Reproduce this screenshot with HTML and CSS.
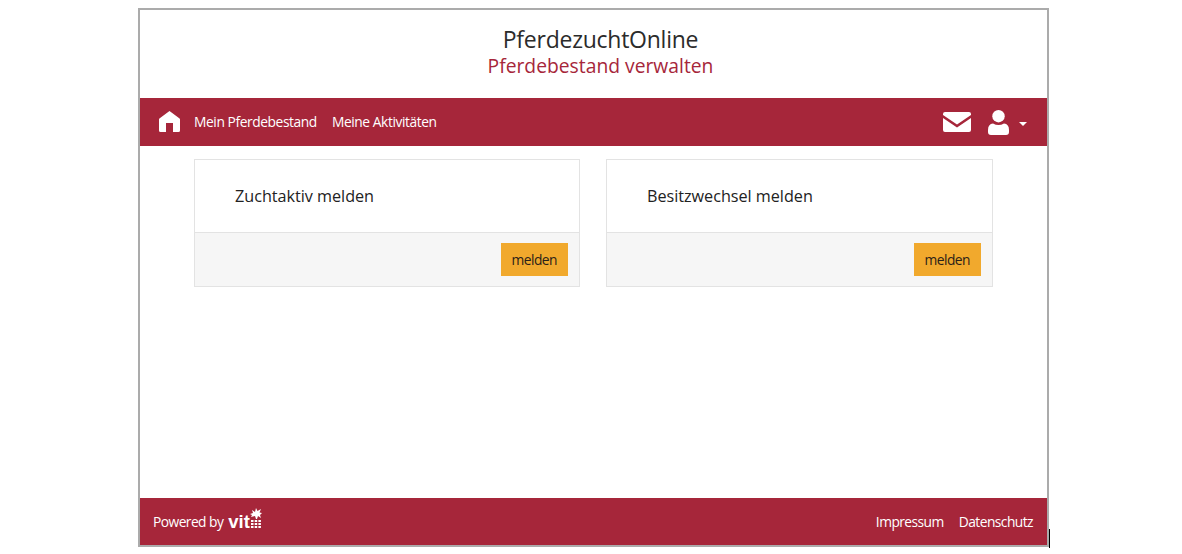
FILE: index.html
```html
<!DOCTYPE html>
<html lang="de">
<head>
<meta charset="utf-8">
<title>PferdezuchtOnline</title>
<link rel="stylesheet" href="styles.css">
</head>
<body>
<div class="frame">
  <header class="head">
    <div class="title">PferdezuchtOnline</div>
    <div class="subtitle">Pferdebestand verwalten</div>
  </header>
  <nav class="nav">
    <a class="home" href="#" aria-label="Start">
      <svg viewBox="0 0 21 21" width="21" height="21"><path fill="#fff" d="M10.5 0 L20.6 7.4 Q21 7.8 21 8.6 V19.5 Q21 21 19.5 21 H14 V12 H7 V21 H1.5 Q0 21 0 19.5 V8.6 Q0 7.8 0.4 7.4 Z"/></svg>
    </a>
    <a class="link" href="#">Mein Pferdebestand</a>
    <a class="link" href="#">Meine Aktivitäten</a>
    <span class="spacer"></span>
    <a class="mail" href="#" aria-label="Nachrichten">
      <svg viewBox="0 0 28 20" width="28" height="20"><path fill="#fff" d="M2 0 H26 Q28 0 28 2 V3 L14 12.5 L0 3 V2 Q0 0 2 0 Z M0 6 L14 15.5 L28 6 V18 Q28 20 26 20 H2 Q0 20 0 18 Z"/></svg>
    </a>
    <a class="user" href="#" aria-label="Konto">
      <svg viewBox="0 0 21 25" width="21" height="25"><circle cx="10.5" cy="6.2" r="6.2" fill="#fff"/><path fill="#fff" d="M5 13.5 Q10.5 16.5 16 13.5 Q21 14 21 20 V22 Q21 25 18 25 H3 Q0 25 0 22 V20 Q0 14 5 13.5 Z"/></svg>
      <span class="caret"></span>
    </a>
  </nav>
  <main class="cards">
    <section class="card">
      <div class="card-body">Zuchtaktiv melden</div>
      <div class="card-foot"><button class="btn">melden</button></div>
    </section>
    <section class="card">
      <div class="card-body">Besitzwechsel melden</div>
      <div class="card-foot"><button class="btn">melden</button></div>
    </section>
  </main>
  <footer class="foot">
    <span class="powered">Powered by</span>
    <span class="logo">vit<svg class="plume" viewBox="0 0 12 20" width="12" height="20"><g fill="#fff"><path d="M6 11 L5 8 L1 9 L2 7 L0 6 L3 5 L2 2 L5 4 L6 0 L7.5 3 L11 1 L9.5 4.5 L12 5 L10 7 L11 10 L8 8 L7 11 Z"/><rect x="1" y="12" width="2.5" height="2"/><rect x="4.7" y="12" width="2.5" height="2"/><rect x="8.4" y="12" width="2.5" height="2"/><rect x="1" y="15" width="2.5" height="2"/><rect x="4.7" y="15" width="2.5" height="2"/><rect x="8.4" y="15" width="2.5" height="2"/><rect x="1" y="18" width="2.5" height="2"/><rect x="4.7" y="18" width="2.5" height="2"/><rect x="8.4" y="18" width="2.5" height="2"/></g></svg></span>
    <span class="spacer"></span>
    <a class="flink" href="#">Impressum</a>
    <a class="flink" href="#">Datenschutz</a>
  </footer>
  <span class="cursor"></span>
</div>
</body>
</html>
```
FILE: styles.css
```css
* { box-sizing: border-box; }
html, body { height: 100%; }
body {
  margin: 0;
  padding-top: 8px;
  background: #fff;
  font-family: "Open Sans", "Noto Sans", sans-serif;
  color: #212529;
  overflow: hidden;
}
a { color: inherit; text-decoration: none; }
.frame {
  position: relative;
  width: 911px;
  height: 539px;
  margin-left: 138px;
  border: 2px solid #ababab;
  display: flex;
  flex-direction: column;
}
.head {
  height: 88px;
  padding: 14px 0 0 14px;
  text-align: center;
}
.title { font-size: 23px; line-height: 30px; color: #2b2b2b; letter-spacing: -0.25px; }
.subtitle { font-size: 19.3px; line-height: 24px; color: #a6263a; }
.nav {
  height: 48px;
  background: #a6263a;
  color: #fff;
  display: flex;
  align-items: center;
  padding: 0 20px 0 19px;
  font-size: 13.8px;
  letter-spacing: -0.42px;
}
.home { display: flex; margin-right: 14px; margin-top: -2px; }
.link { margin-right: 15px; margin-top: -1px; }
.spacer { flex: 1; }
.mail { display: flex; margin-right: 17px; }
.user { display: flex; align-items: center; }
.caret {
  width: 0;
  height: 0;
  margin: 4px 0 0 10px;
  border-left: 4px solid transparent;
  border-right: 4px solid transparent;
  border-top: 4px solid #fff;
}
.cards {
  flex: 1;
  display: flex;
  gap: 26px;
  padding: 13px 54px 0;
  align-items: flex-start;
}
.card {
  width: 386px;
  height: 128px;
  border: 1px solid #e3e3e3;
  display: flex;
  flex-direction: column;
}
.card + .card { width: 387px; }
.card-body {
  height: 73px;
  padding: 0 40px;
  display: flex;
  align-items: center;
  font-size: 16.2px;
  letter-spacing: -0.02px;
  color: #222;
  border-bottom: 1px solid #e3e3e3;
}
.card-foot {
  flex: 1;
  background: #f6f6f6;
  display: flex;
  justify-content: flex-end;
  align-items: center;
  padding: 0 11px;
}
.btn {
  width: 67.5px;
  height: 33px;
  border: 0;
  padding: 0;
  background: #f1a92d;
  color: #2b2118;
  font: inherit;
  font-size: 13.8px;
  letter-spacing: -0.5px;
}
.foot {
  height: 47px;
  background: #a6263a;
  color: #fff;
  display: flex;
  align-items: center;
  padding: 0 14px 0 13px;
  font-size: 13.8px;
  letter-spacing: -0.55px;
}
.logo {
  display: flex;
  align-items: flex-end;
  margin: 0 0 3px 5px;
  font-family: "Liberation Sans", sans-serif;
  font-weight: 700;
  font-size: 18.5px;
  line-height: 20px;
  letter-spacing: 0;
}
.plume { margin: 0 0 4px 0; }
.flink { margin-left: 15px; }
.cursor {
  position: absolute;
  right: -3px;
  bottom: -3px;
  width: 1px;
  height: 19px;
  background: #000;
}
```
